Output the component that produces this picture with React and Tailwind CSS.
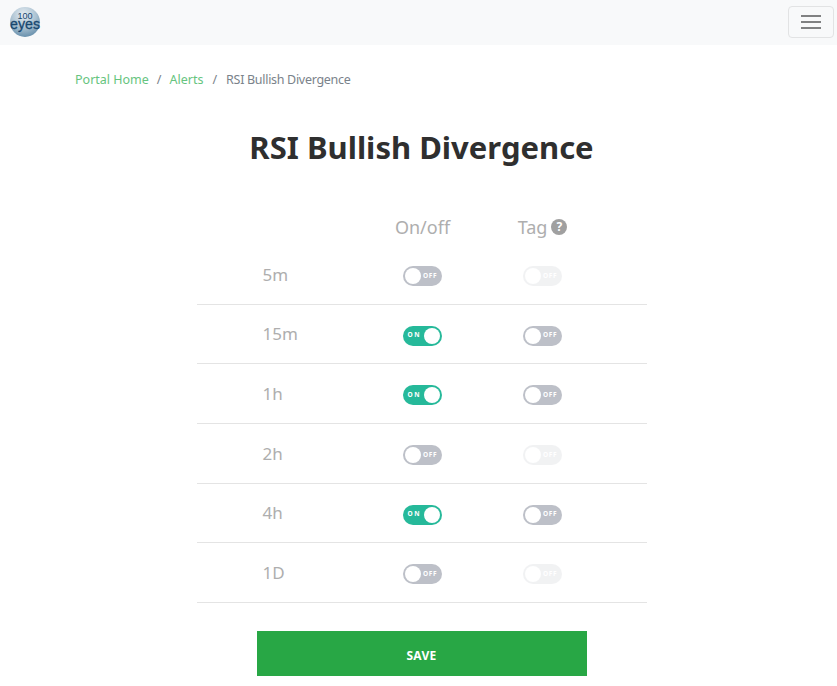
import React from 'react';

const rows = [
  { label: '5m', on: false, tagDisabled: true },
  { label: '15m', on: true, tagDisabled: false },
  { label: '1h', on: true, tagDisabled: false },
  { label: '2h', on: false, tagDisabled: true },
  { label: '4h', on: true, tagDisabled: false },
  { label: '1D', on: false, tagDisabled: true },
];

const Toggle = ({ on = false, disabled = false }) => (
  <div className={`flex h-5 w-[39px] items-center rounded-full ${on ? 'justify-end bg-[#26b99a]' : 'bg-[#bdc0c8]'} ${disabled ? 'opacity-20' : ''}`}>
    {on && <span className="mr-[3px] text-[6.5px] font-bold leading-none tracking-[1.5px] text-white">ON</span>}
    <span className={`h-4 w-4 rounded-full bg-white ${on ? 'mr-0.5' : 'ml-0.5'}`} />
    {!on && <span className="ml-[2px] text-[6.5px] font-bold leading-none tracking-[0.6px] text-white">OFF</span>}
  </div>
);

const Logo = () => (
  <svg width="32" height="32" viewBox="0 0 32 32">
    <defs>
      <radialGradient id="ball" cx="45%" cy="25%" r="80%">
        <stop offset="0%" stopColor="#e6edf2" />
        <stop offset="55%" stopColor="#a9c0d0" />
        <stop offset="100%" stopColor="#5f8aa8" />
      </radialGradient>
    </defs>
    <circle cx="16" cy="16" r="15" fill="url(#ball)" />
    <text x="16" y="13" textAnchor="middle" fontSize="9" fill="#17476f" fontFamily="Liberation Sans, sans-serif">100</text>
    <text x="16" y="23" textAnchor="middle" fontSize="15" textLength="30" lengthAdjust="spacingAndGlyphs" fill="#17476f" stroke="#17476f" strokeWidth="0.3" fontFamily="Liberation Sans, sans-serif">eyes</text>
  </svg>
);

const App = () => {
  return (
    <div className="min-h-[686px] bg-white font-['Noto_Sans',sans-serif]">
      <nav className="flex h-[45px] items-start justify-between bg-[#f8f9fa] pl-[9px] pr-[3px]">
        <div className="pt-1.5"><Logo /></div>
        <button className="mt-1.5 flex h-8 w-[46px] flex-col items-center justify-center gap-[4px] rounded border border-[#e2e3e4]">
          <span className="h-0.5 w-5 bg-[#808182]" />
          <span className="h-0.5 w-5 bg-[#808182]" />
          <span className="h-0.5 w-5 bg-[#808182]" />
        </button>
      </nav>

      <main className="pl-[75px] pr-[69px]">
        <div className="flex h-[70px] items-center text-[12.5px] text-[#7a828a]">
          <span className="text-[#66c47e]">Portal Home</span>
          <span className="px-[8px]">/</span>
          <span className="text-[#66c47e]">Alerts</span>
          <span className="px-[9px]">/</span>
          <span className="tracking-[-0.3px]">RSI Bullish Divergence</span>
        </div>

        <h1 className="-mt-px text-center text-[31px] font-bold leading-[66px] text-[#2f2f2f]">RSI Bullish Divergence</h1>

        <div className="mx-auto mt-[29px] w-[450px] text-[#aeaeae]">
          <div className="grid h-9 grid-cols-[166px_120px_120px_44px] items-center text-[18px]">
            <span />
            <span className="text-center">On/off</span>
            <span className="flex items-center justify-center gap-1">
              Tag
              <span className="flex h-4 w-4 items-center justify-center rounded-full bg-[#a0a0a0] text-[12px] font-bold leading-none text-white">?</span>
            </span>
          </div>
          {rows.map((row) => (
            <div key={row.label} className="grid h-[59.7px] grid-cols-[166px_120px_120px_44px] items-center border-b border-[#e4e4e4] text-[17px]">
              <span className="pl-[66px]">{row.label}</span>
              <div className="flex justify-center pt-[3px]"><Toggle on={row.on} /></div>
              <div className="flex justify-center pt-[3px]"><Toggle disabled={row.tagDisabled} /></div>
            </div>
          ))}
        </div>

        <button className="mx-auto mt-7 block h-[45px] w-[330px] bg-[#28a745] pt-1 text-xs font-bold tracking-wide text-white">SAVE</button>
      </main>
    </div>
  );
};

export default App;
